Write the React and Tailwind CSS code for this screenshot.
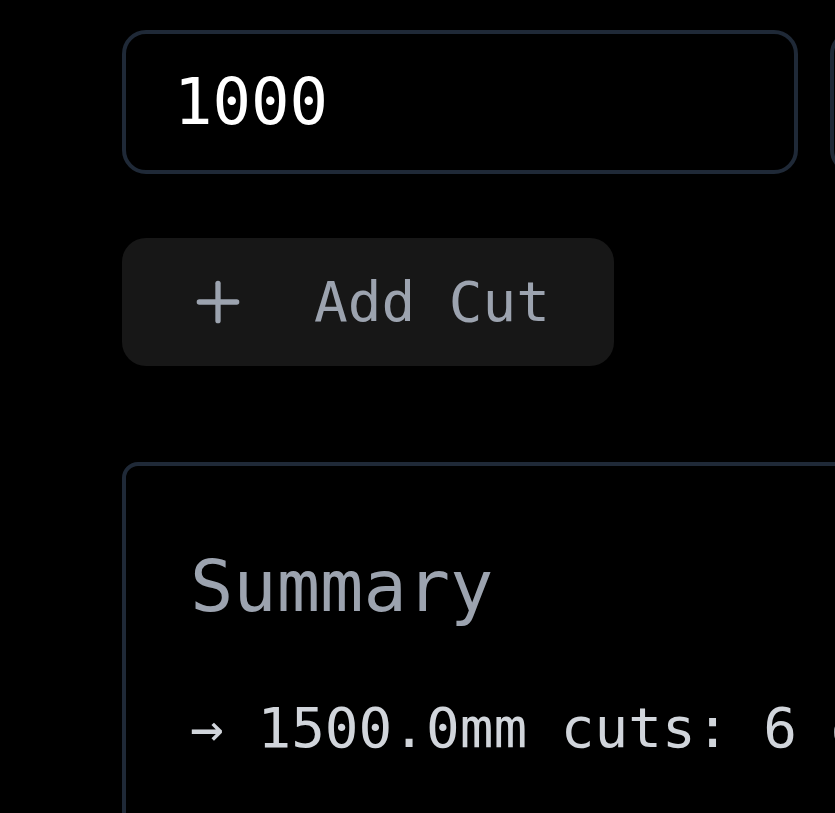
import React from "react";
import { Plus } from "lucide-react";

export default function App() {
  return (
    <div
      className="w-[835px] h-[813px] overflow-hidden bg-black slashed-zero"
      style={{ fontFamily: '"DejaVu Sans Mono", "Liberation Mono", monospace' }}
    >
      <div className="w-[1600px] pl-[122px] pt-[30px] flex flex-col items-start">
        <div className="flex gap-[32px]">
          <div className="w-[676px] h-[144px] border-4 border-[#1f2937] rounded-[24px] px-[48px] flex items-center text-white text-[64px] leading-[96px] slashed-zero">
            1000
          </div>
          <div className="w-[676px] h-[144px] border-4 border-[#1f2937] rounded-[24px] px-[48px] flex items-center text-white text-[64px] leading-[96px]"></div>
        </div>

        <button className="mt-[64px] h-[128px] w-[492px] bg-[#171717] rounded-[24px] pl-[64px] flex items-center gap-[64px] text-[#9ca3af] text-[56px] leading-[80px]">
          <Plus size={64} strokeWidth={2} />
          <span>Add Cut</span>
        </button>

        <div className="mt-[96px] w-[1300px] h-[600px] border-4 border-[#1f2937] rounded-[16px] p-[64px]">
          <div className="text-[72px] leading-[112px] text-[#9ca3af] mb-[46px]">Summary</div>
          <div className="text-[56px] leading-[80px] text-[#d1d5db] whitespace-pre slashed-zero">
            → 1500.0mm cuts: 6 of 6
          </div>
        </div>
      </div>
    </div>
  );
}
